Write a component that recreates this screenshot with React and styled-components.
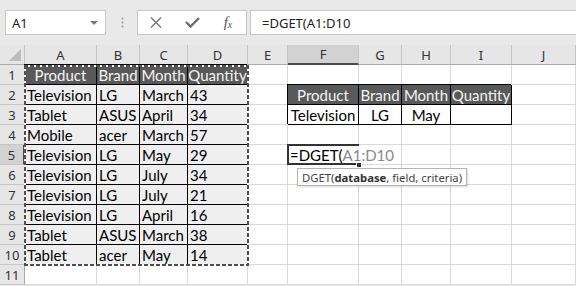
import React from 'react';
import styled, { createGlobalStyle } from 'styled-components';

const GlobalStyle = createGlobalStyle`
  body {
    margin: 0;
    background: #e9e9e9;
    overflow: hidden;
  }
`;

const colWidths = [72, 43, 48, 60, 40, 71, 43, 49, 61, 64];
const letters = ['A', 'B', 'C', 'D', 'E', 'F', 'G', 'H', 'I', 'J'];

const data = [
  ['Television', 'LG', 'March', '43'],
  ['Tablet', 'ASUS', 'April', '34'],
  ['Mobile', 'acer', 'March', '57'],
  ['Television', 'LG', 'May', '29'],
  ['Television', 'LG', 'July', '34'],
  ['Television', 'LG', 'July', '21'],
  ['Television', 'LG', 'April', '16'],
  ['Tablet', 'ASUS', 'March', '38'],
  ['Tablet', 'acer', 'May', '14'],
];

const heads = ['Product', 'Brand', 'Month', 'Quantity'];

function cellAt(row, col) {
  // col: 0 = A
  if (row === 1 && col < 4) return { text: heads[col], kind: 'head' };
  if (row >= 2 && row <= 10 && col < 4) return { text: data[row - 2][col], kind: 'data' };
  if (row === 2 && col >= 5 && col <= 8) return { text: heads[col - 5], kind: 'head' };
  if (row === 3 && col >= 5 && col <= 8)
    return { text: ['Television', 'LG', 'May', ''][col - 5], kind: 'crit' };
  return { text: '', kind: 'plain' };
}

export default function App() {
  const rows = [];
  for (let r = 1; r <= 11; r++) {
    rows.push(
      <RowHeader key={`h${r}`} $r={r + 1} $active={r === 5}>
        {r}
      </RowHeader>
    );
    letters.forEach((_, c) => {
      if (r === 5 && c === 5) {
        rows.push(
          <EditCell key={`${r}-${c}`} $r={r + 1} $c={c + 2}>
            =DGET(<Ref>A1:D10</Ref>
            <Handle />
            <Tip>
              DGET(<b>database</b>, field, criteria)
            </Tip>
          </EditCell>
        );
        return;
      }
      const cell = cellAt(r, c);
      rows.push(
        <Cell key={`${r}-${c}`} $r={r + 1} $c={c + 2} $kind={cell.kind}>
          {cell.text}
        </Cell>
      );
    });
  }

  return (
    <>
      <GlobalStyle />
      <FormulaBar>
        <NameBox>
          A1
          <Caret />
        </NameBox>
        <Grip>
          <svg width="3" height="11" viewBox="0 0 3 11">
            <circle cx="1.5" cy="1.5" r="1" fill="#9a9a9a" />
            <circle cx="1.5" cy="5.5" r="1" fill="#9a9a9a" />
            <circle cx="1.5" cy="9.5" r="1" fill="#9a9a9a" />
          </svg>
        </Grip>
        <ButtonBox>
          <IconSlot>
            <svg width="12" height="11" viewBox="0 0 12 11">
              <path d="M1 0.5 L11 10.5 M11 0.5 L1 10.5" stroke="#7a7a7a" strokeWidth="1.5" fill="none" />
            </svg>
          </IconSlot>
          <IconSlot>
            <svg width="15" height="11" viewBox="0 0 15 11">
              <path d="M1 5 L5.5 9.5 L14 1" stroke="#6e6e6e" strokeWidth="2.4" fill="none" />
            </svg>
          </IconSlot>
          <IconSlot>
            <Fx>
              f<sub>x</sub>
            </Fx>
          </IconSlot>
        </ButtonBox>
        <FormulaInput>=DGET(A1:D10</FormulaInput>
      </FormulaBar>
      <Sheet>
        <Corner>
          <Triangle />
        </Corner>
        {letters.map((l, i) => (
          <ColHeader key={l} $c={i + 2} $active={l === 'F'}>
            {l}
          </ColHeader>
        ))}
        {rows}
        <Ants />
      </Sheet>
    </>
  );
}

const FormulaBar = styled.div`
  height: 45px;
  display: flex;
  align-items: center;
  padding-left: 5px;
  font-family: 'Noto Sans', sans-serif;
  font-size: 13px;
  color: #222;
`;

const NameBox = styled.div`
  box-sizing: border-box;
  width: 101px;
  height: 25px;
  background: #fff;
  border: 1px solid #c8c8c8;
  display: flex;
  align-items: center;
  padding-left: 6px;
`;

const Caret = styled.span`
  margin-left: auto;
  margin-right: 7px;
  width: 0;
  height: 0;
  border-left: 4px solid transparent;
  border-right: 4px solid transparent;
  border-top: 4px solid #7a7a7a;
`;

const Grip = styled.div`
  margin-left: 15px;
  display: flex;
  align-items: center;
`;

const ButtonBox = styled.div`
  box-sizing: border-box;
  margin-left: 13px;
  height: 25px;
  background: #fff;
  border: 1px solid #c8c8c8;
  display: flex;
`;

const IconSlot = styled.div`
  width: 36px;
  display: flex;
  align-items: center;
  justify-content: center;
`;

const Fx = styled.span`
  font-family: 'Liberation Serif', serif;
  font-style: italic;
  font-size: 15px;
  color: #555;
  sub {
    font-size: 10px;
    vertical-align: -1px;
  }
`;

const FormulaInput = styled.div`
  box-sizing: border-box;
  flex: 1;
  margin-left: 3px;
  height: 25px;
  background: #fff;
  border: 1px solid #c8c8c8;
  border-right: none;
  display: flex;
  align-items: center;
  padding-left: 11px;
`;

const Sheet = styled.div`
  display: grid;
  grid-template-columns: 25px ${colWidths.map((w) => `${w}px`).join(' ')};
  grid-auto-rows: 20px;
  background: #fff;
`;

const Corner = styled.div`
  grid-row: 1;
  grid-column: 1;
  box-sizing: border-box;
  background: #e6e6e6;
  border-right: 1px solid #c6c6c6;
  border-bottom: 1px solid #ababab;
  display: flex;
  align-items: flex-end;
  justify-content: flex-end;
  padding: 0 3px 3px 0;
`;

const Triangle = styled.span`
  width: 0;
  height: 0;
  border-left: 12px solid transparent;
  border-bottom: 12px solid #bdbdbd;
`;

const ColHeader = styled.div`
  grid-row: 1;
  grid-column: ${(p) => p.$c};
  box-sizing: border-box;
  background: ${(p) => (p.$active ? '#d2d2d2' : '#e6e6e6')};
  border-right: 1px solid #c6c6c6;
  border-bottom: ${(p) => (p.$active ? '2px solid #4a4a4a' : '1px solid #ababab')};
  display: flex;
  align-items: center;
  justify-content: center;
  font-family: 'Noto Sans', sans-serif;
  font-size: 13px;
  color: #333;
`;

const RowHeader = styled.div`
  grid-row: ${(p) => p.$r};
  grid-column: 1;
  box-sizing: border-box;
  background: ${(p) => (p.$active ? '#d2d2d2' : '#e6e6e6')};
  border-right: ${(p) => (p.$active ? '2px solid #4a4a4a' : '1px solid #ababab')};
  border-bottom: 1px solid #c6c6c6;
  display: flex;
  align-items: center;
  justify-content: center;
  font-family: 'Noto Sans', sans-serif;
  font-size: 13px;
  color: #333;
`;

const kinds = {
  plain: { bg: '#fff', color: '#000', line: '#d9d9d9', align: 'flex-start' },
  head: { bg: '#595959', color: '#f4f4f4', line: '#000', align: 'center' },
  data: { bg: '#efefef', color: '#000', line: '#000', align: 'flex-start' },
  crit: { bg: '#fff', color: '#000', line: '#000', align: 'center' },
};

const Cell = styled.div`
  grid-row: ${(p) => p.$r};
  grid-column: ${(p) => p.$c};
  box-sizing: border-box;
  background: ${(p) => kinds[p.$kind].bg};
  color: ${(p) => kinds[p.$kind].color};
  border-right: 1px solid ${(p) => kinds[p.$kind].line};
  border-bottom: 1px solid ${(p) => kinds[p.$kind].line};
  box-shadow: ${(p) => (p.$kind === 'plain' ? 'none' : '-1px -1px 0 #000')};
  display: flex;
  align-items: center;
  justify-content: ${(p) => kinds[p.$kind].align};
  padding: 0 2px;
  font-family: Lato, 'Liberation Sans', sans-serif;
  font-size: 15px;
  white-space: nowrap;
  overflow: hidden;
`;

const EditCell = styled.div`
  grid-row: ${(p) => p.$r};
  grid-column: ${(p) => p.$c};
  box-sizing: border-box;
  position: relative;
  z-index: 2;
  margin: -1px 0 0 -1px;
  border: 2px solid #333;
  border-right: none;
  background: #fff;
  display: flex;
  align-items: center;
  padding-left: 1px;
  font-family: Lato, 'Liberation Sans', sans-serif;
  font-size: 15px;
  color: #000;
  white-space: nowrap;
`;

const Ref = styled.span`
  color: #8a8a8a;
`;

const Handle = styled.span`
  position: absolute;
  right: -3px;
  bottom: -5px;
  width: 4px;
  height: 4px;
  background: #333;
  border: 1px solid #fff;
`;

const Tip = styled.div`
  position: absolute;
  left: 8px;
  top: 22px;
  height: 18px;
  box-sizing: border-box;
  padding: 0 4px;
  display: flex;
  align-items: center;
  background: #fff;
  border: 1px solid #b4b4b4;
  box-shadow: 1px 1px 2px rgba(0, 0, 0, 0.15);
  font-family: 'Noto Sans', sans-serif;
  font-size: 11.3px;
  color: #444;
  b {
    font-weight: 700;
    color: #333;
  }
`;

const Ants = styled.div`
  grid-column: 2 / 6;
  grid-row: 2 / 12;
  margin: 0 -1px -1px -1px;
  pointer-events: none;
  background:
    repeating-linear-gradient(90deg, #4f4f4f 0 4px, #fff 4px 6px) top / 100% 2px no-repeat,
    repeating-linear-gradient(90deg, #4f4f4f 0 4px, #fff 4px 6px) bottom / 100% 2px no-repeat,
    repeating-linear-gradient(180deg, #4f4f4f 0 4px, #fff 4px 6px) left / 2px 100% no-repeat,
    repeating-linear-gradient(180deg, #4f4f4f 0 4px, #fff 4px 6px) right / 2px 100% no-repeat;
`;
